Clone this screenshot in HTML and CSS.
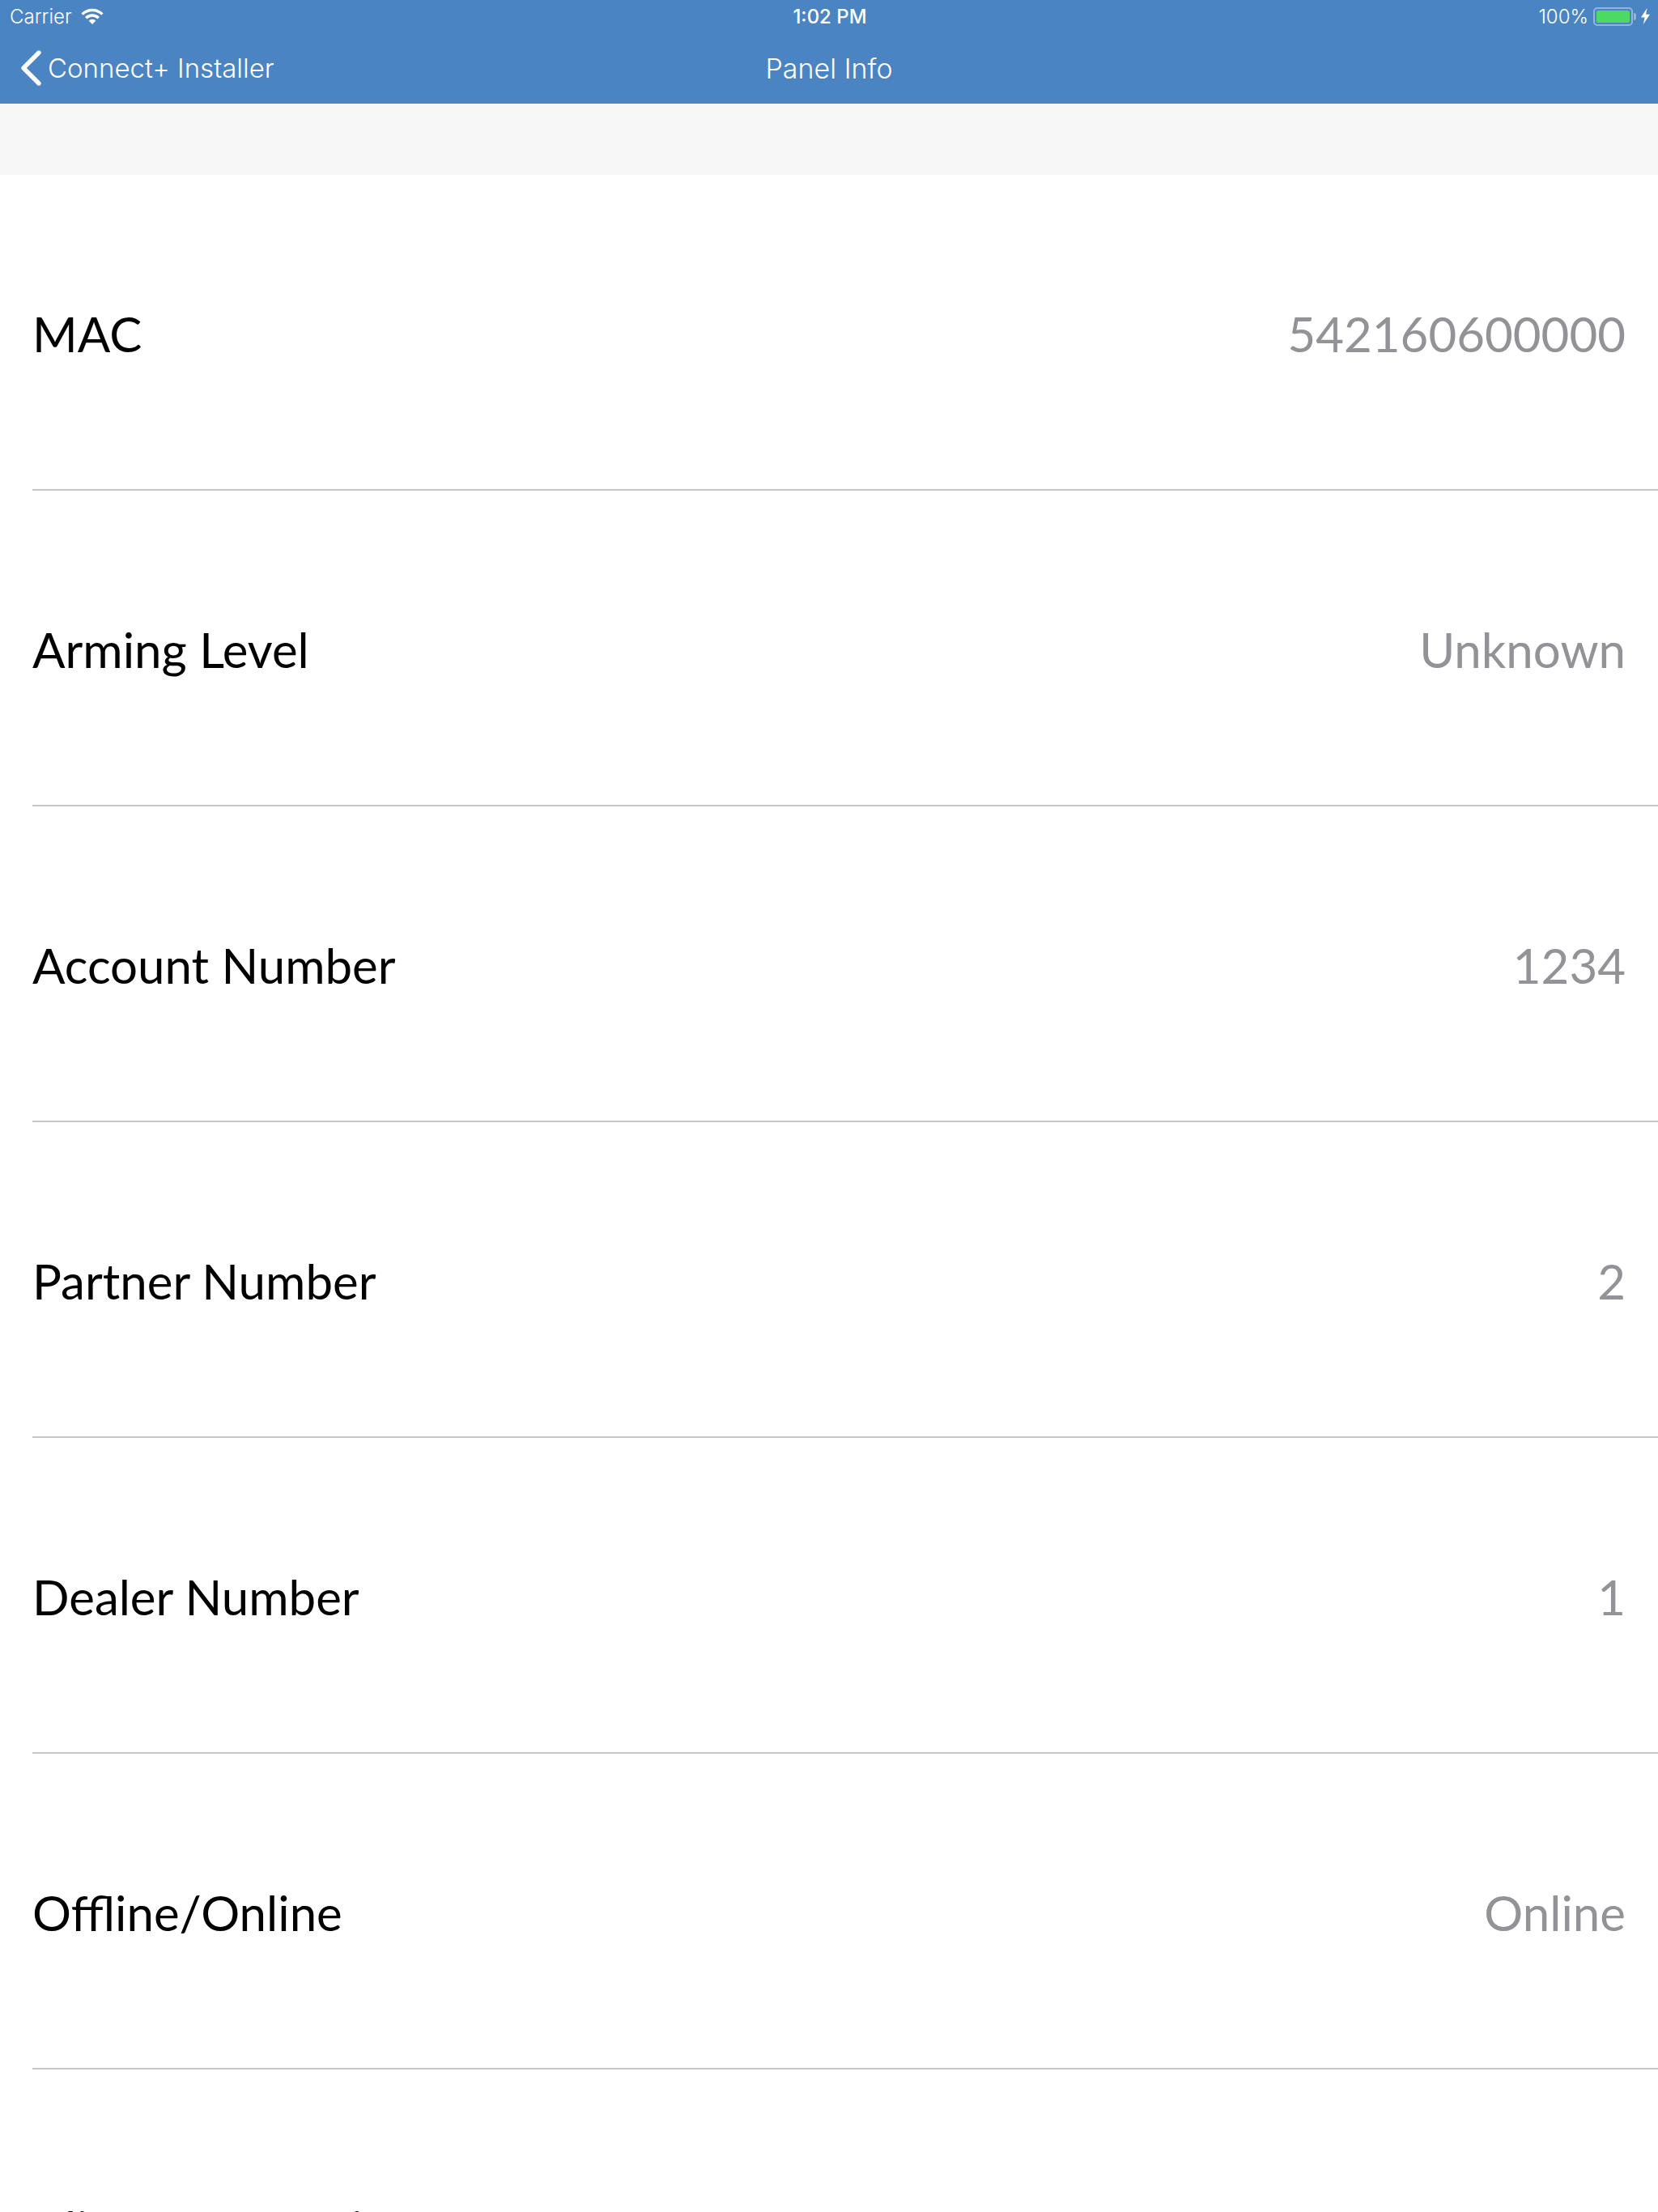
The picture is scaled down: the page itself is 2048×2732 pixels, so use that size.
FILE: index.html
```html
<!DOCTYPE html>
<html lang="en">
<head>
    <meta charset="UTF-8">
    <title>Panel Info</title>
    <link rel="stylesheet" href="styles.css">
</head>
<body>
    <header class="topbar">
        <div class="status-bar">
            <div class="status-left">
                <span>Carrier</span>
                <svg class="wifi" width="28" height="20" viewBox="0 0 28 20">
                    <path d="M1.6 7.6A17.5 17.5 0 0 1 26.4 7.6" fill="none" stroke="#fff" stroke-width="3.4"/>
                    <path d="M6.2 12.2A11 11 0 0 1 21.8 12.2" fill="none" stroke="#fff" stroke-width="3.4"/>
                    <path d="M14 20L9.6 15.6A6.2 6.2 0 0 1 18.4 15.6Z" fill="#fff"/>
                </svg>
            </div>
            <div class="status-time">1:02 PM</div>
            <div class="status-right">
                <span>100%</span>
                <div class="battery"><div class="battery-fill"></div></div>
                <div class="battery-cap"></div>
                <svg class="bolt" width="11" height="20" viewBox="0 0 11 20">
                    <path d="M7.5 0L0 11.5H4.6L2.8 20L11 7.8H6.2Z" fill="#fff"/>
                </svg>
            </div>
        </div>
        <nav class="nav-bar">
            <a class="back" href="#">
                <svg width="26" height="44" viewBox="0 0 26 44">
                    <path d="M22 3L3 22L22 41" fill="none" stroke="#fff" stroke-width="5.4" stroke-linecap="round" stroke-linejoin="round"/>
                </svg>
                <span>Connect+ Installer</span>
            </a>
            <div class="nav-title">Panel Info</div>
        </nav>
    </header>
    <div class="spacer"></div>
    <ul class="info-list">
        <li class="info-row"><span class="label">MAC</span><span class="value">542160600000</span></li>
        <li class="info-row"><span class="label">Arming Level</span><span class="value">Unknown</span></li>
        <li class="info-row"><span class="label">Account Number</span><span class="value">1234</span></li>
        <li class="info-row"><span class="label">Partner Number</span><span class="value">2</span></li>
        <li class="info-row"><span class="label">Dealer Number</span><span class="value">1</span></li>
        <li class="info-row"><span class="label">Offline/Online</span><span class="value">Online</span></li>
        <li class="info-row"><span class="label">Client Connection</span><span class="value">10.10.10.10</span></li>
    </ul>
</body>
</html>
```

FILE: styles.css
```css
* {
    margin: 0;
    padding: 0;
    box-sizing: border-box;
}

html, body {
    height: 2732px;
    overflow: hidden;
}

body {
    background-color: #fff;
    font-family: Lato, sans-serif;
}

.topbar {
    background-color: #4a84c3;
    color: #fff;
    font-family: Inter, sans-serif;
}

.status-bar {
    height: 40px;
    padding: 0 10px 0 12px;
    display: grid;
    grid-template-columns: 1fr auto 1fr;
    align-items: center;
    font-size: 24px;
}

.status-left {
    display: flex;
    align-items: center;
    gap: 11px;
    font-weight: 300;
}

.status-time {
    font-weight: 500;
}

.status-right {
    display: flex;
    align-items: center;
    justify-content: flex-end;
    font-weight: 300;
}

.battery {
    width: 49px;
    height: 23px;
    margin-left: 6px;
    padding: 2px;
    border: 2px solid rgba(255, 255, 255, 0.4);
    border-radius: 5px;
}

.battery-fill {
    height: 100%;
    background-color: #4cd964;
    border-radius: 2px;
}

.battery-cap {
    width: 3px;
    height: 9px;
    margin-left: 1px;
    background-color: rgba(255, 255, 255, 0.4);
    border-radius: 0 3px 3px 0;
}

.bolt {
    margin-left: 6px;
}

.nav-bar {
    height: 88px;
    padding: 0 26px;
    display: grid;
    grid-template-columns: 1fr auto 1fr;
    align-items: center;
    font-size: 33px;
    font-weight: 300;
}

.back {
    display: flex;
    align-items: center;
    gap: 7px;
    color: #fff;
    text-decoration: none;
}

.nav-title {
    font-size: 34px;
}

.spacer {
    height: 88px;
    background-color: #f7f7f7;
}

.info-list {
    list-style: none;
    padding-left: 40px;
}

.info-row {
    height: 390px;
    padding: 3px 40px 0 0;
    display: flex;
    justify-content: space-between;
    align-items: center;
    border-bottom: 2px solid #c8c7cc;
    font-size: 60px;
}

.label {
    color: #000;
}

.value {
    color: #929297;
}
```
